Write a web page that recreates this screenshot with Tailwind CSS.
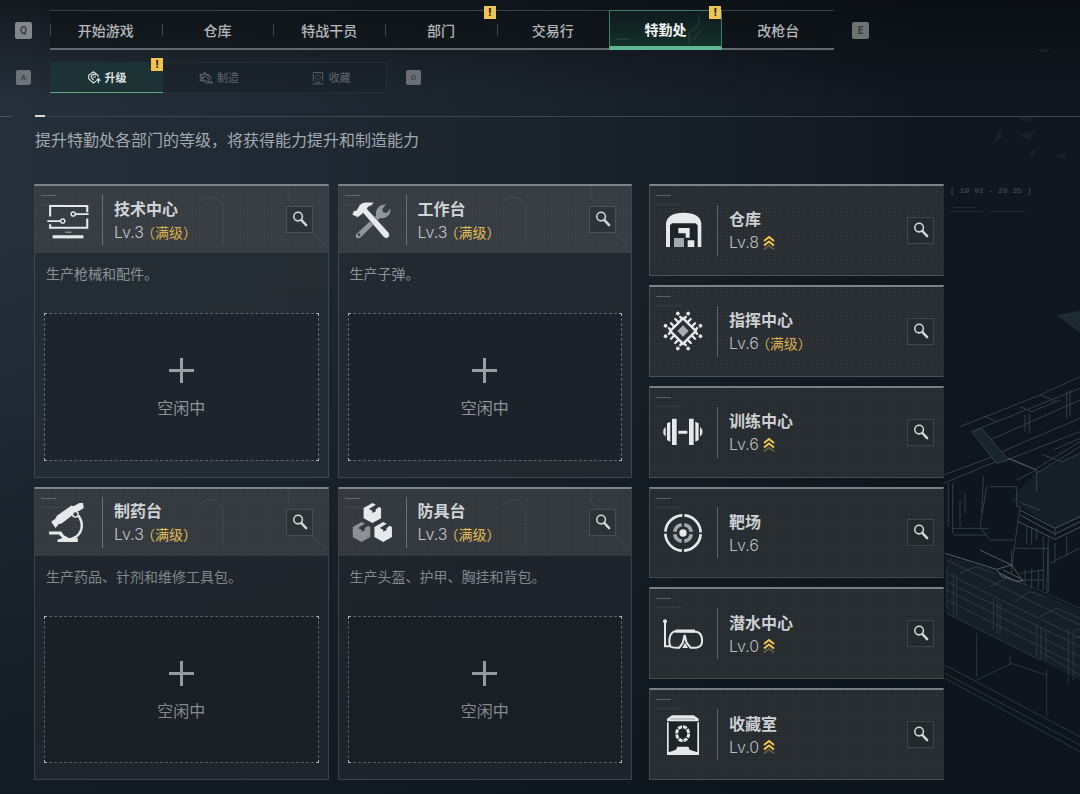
<!DOCTYPE html>
<html lang="zh-CN">
<head>
<meta charset="utf-8">
<meta name="viewport" content="width=device-width, initial-scale=1">
<title>特勤处</title>
<script src="https://cdn.jsdelivr.net/npm/@tailwindcss/browser@4"></script>
</head>
<body class="relative flex min-h-screen flex-col overflow-x-hidden bg-[#141c24] bg-[linear-gradient(to_bottom,rgba(8,10,13,0.6),transparent_100px),linear-gradient(to_bottom,transparent_30%,rgba(12,20,27,0.75)),linear-gradient(to_right,#252f3a,#1c252e_45%,#10171f_85%)] pb-[14px] font-['Noto_Sans_CJK_SC',sans-serif] text-[#c3c7cb]">

<!-- shared symbols -->
<svg class="hidden" aria-hidden="true">
  <symbol id="search" viewBox="765 78 81 81">
    <g fill="none" stroke="#d3d6d9"><circle cx="801" cy="109" r="14" stroke-width="5"/><path d="M811 120 827 137" stroke-width="8" stroke-linecap="round"/></g>
  </symbol>
  <symbol id="rise" viewBox="0 0 12 15">
    <g fill="none" stroke="#f0c64f" stroke-width="2"><path d="M1 6 6 2 11 6M1 10.500 6 6.500 11 10.500"/><path d="M1 14.500 6 10.500 11 14.500" opacity=".3"/></g>
  </symbol>
  <symbol id="corners" viewBox="0 0 12 12"><path d="M0 0H3V1H1V3H0Z" fill="#aab0b6"/></symbol>
  <symbol id="caption" viewBox="0 0 30 12">
    <path d="M0 1.500H15" stroke="#868b8f" opacity=".55"/><path d="M0 10.500H26" stroke="#5f666b" opacity=".25"/>
  </symbol>
  <symbol id="trace" viewBox="0 0 150 66">
    <path d="M22 16Q26 11 34 11Q44 13 45 22V58M110 0V12L126 30V40L148 60" fill="none" stroke="#7b848c" stroke-width="1" opacity=".2"/>
  </symbol>
</svg>

<!-- wireframe scenery behind the panels -->
<svg class="pointer-events-none absolute top-[280px] right-0 h-[514px] w-[140px]" viewBox="0 0 420 1542" fill="none" stroke="#56656e" stroke-width="3" aria-hidden="true">
  <path d="M350 105 420 92V158Z" fill="#1d2a31" stroke="none"/>
  <path d="M210 660 345 745 420 710V520L290 575ZM20 830 170 868 300 940 420 990V1200L20 1000Z" fill="#1b272e" stroke="none" opacity=".6"/>
  <g opacity=".5">
    <path d="M60 440 300 345 420 290M95 455 420 325M150 480 420 360M185 515 420 415M200 540 420 455M10 610 180 540M10 585 160 530M240 380 275 395 360 360M300 345 345 362M130 408 170 425M255 405V455M268 400V460M380 335V415M390 330V410"/>
    <path d="M95 455 125 445 205 540 170 550Z" fill="#22323a"/>
    <path d="M205 535 290 570" stroke="#84929a" stroke-width="4"/>
    <path d="M290 565 420 485M290 580 420 500M310 525 365 545 420 520M340 510 420 475M230 600 290 570V635M150 620H230V680H240L215 860M140 620 120 740 150 780H220M130 590 125 700M25 610V740M38 610V760M40 745H145M40 765H140M60 660V740M75 640V700"/>
    <path d="M240 690 345 745 420 710M240 705 345 762 420 725M235 725 345 778 420 742" stroke="#7d8c95"/>
    <path d="M245 670 300 690M260 735V790M275 740V795M290 745V780M345 745V770M220 805H325V935M215 810V880M310 770V930M325 770 320 940M330 850 420 805M345 790V850M380 770V830M240 880 310 870M240 900H310M255 870V915M275 865V925M295 870V925"/>
  </g>
  <g opacity=".55">
    <path d="M15 820 170 868 185 890 240 905 M120 810 215 855 250 905M170 868 215 855M180 880 230 905 250 900M190 870 240 895" stroke="#8a979f"/>
    <path d="M240 905 420 985M60 880 110 860 160 880M150 920 200 895 245 910M225 965 270 935 315 950M300 1010 350 985 420 1015M20 840 420 1035M20 880 420 1075M20 905 420 1100M20 930 420 1130M20 960 420 1160M20 1000 300 1140M300 1115 420 1185M160 955V1050M172 960V1060M180 965V1065M290 1030V1130M303 1040V1140M318 1050V1145M385 1045V1210M400 1050V1200M20 860V990M40 880V1005M50 885V1010M405 1050H420M405 1070H420" opacity=".65"/>
  </g>
  <g opacity=".4">
    <path d="M15 1155 420 1370M15 1180 420 1395M15 1195 420 1415M110 1060V1190M320 1170V1310M110 1200 215 1150 320 1185M210 1125V1155" />
  </g>
</svg>
<svg class="pointer-events-none absolute top-[40px] right-[10px] h-[130px] w-[90px] opacity-15" viewBox="0 0 90 130" fill="#4a5963" aria-hidden="true"><path d="M55 10 70 8 66 13ZM38 78 54 76 50 82ZM40 95 56 90 48 100ZM12 104 20 88 22 98ZM76 116 85 112V118ZM50 112 58 108 52 118Z"/></svg>

<header class="relative">
  <div class="flex items-center gap-[18px] pt-[10px] pr-[211px] pl-[15px]">
    <kbd class="flex size-[17px] items-center justify-center rounded-xs bg-[#83868a] font-['Roboto',sans-serif] text-[10px] font-bold text-[#3b3f44]">Q</kbd>
    <nav class="flex h-10 flex-1 border-t border-b-2 border-t-[#3a4145] border-b-[#63686c] bg-[#0d1114]/50 text-sm font-medium text-[#b4b8bb]" aria-label="主导航">
      <a href="#" class="relative flex flex-1 items-center justify-center before:absolute before:left-0 before:h-3 before:w-px before:bg-[#42474b]">开始游戏</a>
      <a href="#" class="relative flex flex-1 items-center justify-center before:absolute before:left-0 before:h-3 before:w-px before:bg-[#42474b]">仓库</a>
      <a href="#" class="relative flex flex-1 items-center justify-center before:absolute before:left-0 before:h-3 before:w-px before:bg-[#42474b]">特战干员</a>
      <a href="#" class="relative flex flex-1 items-center justify-center before:absolute before:left-0 before:h-3 before:w-px before:bg-[#42474b]">部门
        <span class="absolute -top-[5px] right-px flex h-[13px] w-3 items-center justify-center bg-[#eec455] font-['Roboto',sans-serif] text-[11px] leading-none font-black text-[#2d2610]">!</span></a>
      <a href="#" class="relative flex flex-1 items-center justify-center before:absolute before:left-0 before:h-3 before:w-px before:bg-[#42474b]">交易行</a>
      <a href="#" aria-current="page" class="relative -mt-px -mb-0.5 flex flex-1 items-center justify-center border border-b-4 border-[#3d7f69] border-b-[#61b992] bg-[linear-gradient(to_bottom,#0e1b1c,#15302a)] font-bold text-[#f2f5f4]">
        <svg class="absolute inset-0 size-full" viewBox="0 0 112 36" fill="none" stroke="#54786d" opacity=".4" aria-hidden="true"><path d="M4 29H18M80 34V22L90 14V4M84 30 92 20" /></svg>
        <span class="relative">特勤处</span>
        <span class="absolute -top-[5px] right-0 flex h-[13px] w-3 items-center justify-center bg-[#eec455] font-['Roboto',sans-serif] text-[11px] leading-none font-black text-[#2d2610]">!</span></a>
      <a href="#" class="flex flex-1 items-center justify-center">改枪台</a>
    </nav>
    <kbd class="flex size-[17px] items-center justify-center rounded-xs bg-[#6f7273] font-['Roboto',sans-serif] text-[10px] font-bold text-[#34383b]">E</kbd>
  </div>

  <div class="mt-3 flex items-center gap-[19px] pl-4">
    <kbd class="flex size-[15px] items-center justify-center rounded-xs bg-[#6d7379] font-['Roboto',sans-serif] text-[8px] font-bold text-[#3c434b]">A</kbd>
    <nav class="flex h-[31px] text-[11px] font-medium" aria-label="特勤处分页">
      <a href="#" aria-current="page" class="relative flex w-[113px] items-center justify-center gap-1 border-b border-[#5fa98a] bg-[#1c3234] font-bold text-[#dfe3e3]">
        <svg class="size-[14px]" viewBox="0 0 42 42" fill="none" stroke="#d5dada" stroke-width="3.500" aria-hidden="true"><path d="M27 34 19 39 5 26V16L19 5 33 16V21M12 21Q14 12 22 13L27 16M12 22 20 30M17 21H27"/><path d="M34 40V28M28 32 34 26 40 32" stroke-width="4"/></svg>升级
        <span class="absolute -top-1 right-0 flex h-[13px] w-3 items-center justify-center bg-[#f2c34e] font-['Roboto',sans-serif] text-[11px] leading-none font-black text-[#2d2610]">!</span></a>
      <a href="#" class="flex w-28 items-center justify-center gap-1 border-y border-[#252e36] bg-[#171e25]/40 text-[#565e66]">
        <svg class="size-[14px]" viewBox="0 0 42 42" fill="none" stroke="#59616a" stroke-width="4" aria-hidden="true"><path d="M4 10 11 12 17 5 22 12 31 12M4 10V17L9 21 4 28 14 29 19 34M19 16Q10 17 13 26"/><circle cx="30" cy="20" r="5" stroke-dasharray="4 2"/><circle cx="25" cy="33" r="4" stroke-dasharray="4 2"/><circle cx="36" cy="34" r="3"/></svg>制造</a>
      <a href="#" class="flex w-28 items-center justify-center gap-1 border-y border-r border-[#252e36] bg-[#171e25]/40 text-[#565e66]">
        <svg class="size-[14px]" viewBox="0 0 42 42" fill="none" stroke="#59616a" stroke-width="3" aria-hidden="true"><path d="M5 5H37M7 8V30M35 8V30M5 39H37M14 33H28" /><circle cx="21" cy="19" r="7" stroke-dasharray="5 3"/></svg>收藏</a>
    </nav>
    <kbd class="flex size-[15px] items-center justify-center rounded-xs bg-[#696e74] font-['Roboto',sans-serif] text-[8px] font-bold text-[#3c434b]">D</kbd>
  </div>

  <div class="mt-[22px] flex items-center" aria-hidden="true">
    <span class="h-px w-[11px] bg-[#4a5259]"></span>
    <span class="ml-6 h-0.5 w-[10px] bg-[#d6d9db]"></span>
    <span class="h-px flex-1 bg-[#3d464d]"></span>
  </div>
  <h1 class="mt-[10px] pl-[35px] text-base leading-6 text-[#a3a9ae]">提升特勤处各部门的等级，将获得能力提升和制造能力</h1>
</header>

<main class="relative mt-[33px] grid flex-1 grid-cols-[598fr_295fr] gap-[17px] pr-[136px] pl-[34px]">
  <section class="grid grid-cols-2 grid-rows-2 gap-[9px]" aria-label="生产部门">

    <article class="flex flex-col border border-t-2 border-[#3f474e] border-t-[#7e8488] bg-[#262d34]/90">
      <div class="relative flex h-[67px] items-center bg-[#3a4046] bg-[repeating-linear-gradient(to_right,rgba(0,0,0,0.06)_0_1px,transparent_1px_3px),repeating-linear-gradient(to_bottom,rgba(0,0,0,0.06)_0_1px,transparent_1px_3px)] pr-[15px] pl-3">
        <svg class="absolute top-2 left-1.5 h-3 w-[30px]" aria-hidden="true"><use href="#caption"/></svg>
        <svg class="absolute top-0 right-0 h-[66px] w-[150px]" aria-hidden="true"><use href="#trace"/></svg>
        <svg class="relative size-[42px]" viewBox="54 54 120 120" fill="none" stroke="#e6e8ea" stroke-width="6" aria-hidden="true">
          <path d="M63 104V74H169V92M63 126V136H169V110"/><path d="M134 97H173M55 117H93" stroke-width="5"/><circle cx="129" cy="97" r="6" stroke-width="4"/><circle cx="99" cy="117" r="6" stroke-width="4"/><path d="M106 149H124" stroke="#8b9094" stroke-width="4"/><path d="M70 162H158" stroke-width="9"/>
        </svg>
        <span class="mr-[11px] ml-[13px] h-[51px] w-px bg-[#6c7276]"></span>
        <div class="relative flex-1">
          <h2 class="text-base leading-6 font-bold text-[#d0d4d7]">技术中心</h2>
          <p class="flex items-center gap-1 leading-6"><span class="font-['Inter',sans-serif] text-base leading-6 font-light text-[#c2c6ca]">Lv.3</span><span class="text-sm leading-6 text-[#d9b04e] [font-feature-settings:'halt']">（满级）</span></p>
        </div>
        <button type="button" aria-label="查看技术中心" class="relative size-[27px] border border-[#4a5157] bg-[#2d3338]"><svg class="size-full"><use href="#search"/></svg></button>
      </div>
      <p class="mt-2 px-[11px] text-sm leading-6 text-[#8b9197]">生产枪械和配件。</p>
      <button type="button" class="relative mx-[9px] mt-7 mb-4 flex flex-1 flex-col items-center justify-center gap-3 border border-dashed border-[#5f676e] bg-[#1e242b] pt-1">
        <svg class="absolute -top-px -left-px size-3"><use href="#corners"/></svg><svg class="absolute -top-px -right-px size-3 rotate-90"><use href="#corners"/></svg><svg class="absolute -right-px -bottom-px size-3 rotate-180"><use href="#corners"/></svg><svg class="absolute -bottom-px -left-px size-3 -rotate-90"><use href="#corners"/></svg>
        <svg class="size-[25px]" viewBox="0 0 25 25" stroke="#9a9fa6" stroke-width="3" aria-hidden="true"><path d="M12.500 0V25M0 12.500H25"/></svg>
        <span class="text-base leading-6 text-[#8e9399]">空闲中</span>
      </button>
    </article>

    <article class="flex flex-col border border-t-2 border-[#3f474e] border-t-[#7e8488] bg-[#232a31]/90">
      <div class="relative flex h-[67px] items-center bg-[#3a4046] bg-[repeating-linear-gradient(to_right,rgba(0,0,0,0.06)_0_1px,transparent_1px_3px),repeating-linear-gradient(to_bottom,rgba(0,0,0,0.06)_0_1px,transparent_1px_3px)] pr-[15px] pl-3">
        <svg class="absolute top-2 left-1.5 h-3 w-[30px]" aria-hidden="true"><use href="#caption"/></svg>
        <svg class="absolute top-0 right-0 h-[66px] w-[150px]" aria-hidden="true"><use href="#trace"/></svg>
        <svg class="relative size-[42px]" viewBox="63 54 120 120" aria-hidden="true">
          <path d="M78 155 135 101Q131 89 142 77Q149 68 163 70L152 83 156 93 166 93 175 81Q178 96 166 104 158 111 146 108L91 163Q83 169 77 163 75 158 78 155Z" fill="#92979b"/><circle cx="86" cy="156" r="4" fill="#3a4046"/>
          <path d="M66 99 71 87 78 87 88 70Q98 60 113 63L129 63 122 73Q111 74 109 82L172 151 173 160 166 167 158 165 98 95 82 107Z" fill="#e6e8ea" stroke="#3a4046" stroke-width="2"/>
        </svg>
        <span class="mr-[11px] ml-[13px] h-[51px] w-px bg-[#6c7276]"></span>
        <div class="relative flex-1">
          <h2 class="text-base leading-6 font-bold text-[#d0d4d7]">工作台</h2>
          <p class="flex items-center gap-1 leading-6"><span class="font-['Inter',sans-serif] text-base leading-6 font-light text-[#c2c6ca]">Lv.3</span><span class="text-sm leading-6 text-[#e0bb55] [font-feature-settings:'halt']">（满级）</span></p>
        </div>
        <button type="button" aria-label="查看工作台" class="relative size-[27px] border border-[#4a5157] bg-[#2d3338]"><svg class="size-full"><use href="#search"/></svg></button>
      </div>
      <p class="mt-2 px-[11px] text-sm leading-6 text-[#8b9197]">生产子弹。</p>
      <button type="button" class="relative mx-[9px] mt-7 mb-4 flex flex-1 flex-col items-center justify-center gap-3 border border-dashed border-[#5f676e] bg-[#1c2229] pt-1">
        <svg class="absolute -top-px -left-px size-3"><use href="#corners"/></svg><svg class="absolute -top-px -right-px size-3 rotate-90"><use href="#corners"/></svg><svg class="absolute -right-px -bottom-px size-3 rotate-180"><use href="#corners"/></svg><svg class="absolute -bottom-px -left-px size-3 -rotate-90"><use href="#corners"/></svg>
        <svg class="size-[25px]" viewBox="0 0 25 25" stroke="#9a9fa6" stroke-width="3" aria-hidden="true"><path d="M12.500 0V25M0 12.500H25"/></svg>
        <span class="text-base leading-6 text-[#8e9399]">空闲中</span>
      </button>
    </article>

    <article class="flex flex-col border border-t-2 border-[#3a4248] border-t-[#7e8488] bg-[#20272d]/90">
      <div class="relative flex h-[67px] items-center bg-[#373d42] bg-[repeating-linear-gradient(to_right,rgba(0,0,0,0.06)_0_1px,transparent_1px_3px),repeating-linear-gradient(to_bottom,rgba(0,0,0,0.06)_0_1px,transparent_1px_3px)] pr-[15px] pl-3">
        <svg class="absolute top-2 left-1.5 h-3 w-[30px]" aria-hidden="true"><use href="#caption"/></svg>
        <svg class="absolute top-0 right-0 h-[66px] w-[150px]" aria-hidden="true"><use href="#trace"/></svg>
        <svg class="relative size-[42px]" viewBox="54 62 120 120" aria-hidden="true">
          <path d="M66 121 78 113 82 104 124 75 129 77 147 68 157 68 159 82 147 90 140 92 96 126 88 128 78 139Z" fill="#e6e8ea"/>
          <circle cx="135" cy="100" r="8" fill="#373d42" stroke="#e6e8ea" stroke-width="4"/>
          <path d="M144 104Q157 121 152 143 146 164 122 171" fill="none" stroke="#e6e8ea" stroke-width="7"/>
          <path d="M60 149H95L102 160 117 168H142V179H84V173L98 168 88 158H60Z" fill="#e6e8ea"/>
        </svg>
        <span class="mr-[11px] ml-[13px] h-[51px] w-px bg-[#6c7276]"></span>
        <div class="relative flex-1">
          <h2 class="text-base leading-6 font-bold text-[#d0d4d7]">制药台</h2>
          <p class="flex items-center gap-1 leading-6"><span class="font-['Inter',sans-serif] text-base leading-6 font-light text-[#c2c6ca]">Lv.3</span><span class="text-sm leading-6 text-[#e0bb55] [font-feature-settings:'halt']">（满级）</span></p>
        </div>
        <button type="button" aria-label="查看制药台" class="relative size-[27px] border border-[#474e53] bg-[#2d3235]"><svg class="size-full"><use href="#search"/></svg></button>
      </div>
      <p class="mt-2 px-[11px] text-sm leading-6 text-[#81878c]">生产药品、针剂和维修工具包。</p>
      <button type="button" class="relative mx-[9px] mt-7 mb-4 flex flex-1 flex-col items-center justify-center gap-3 border border-dashed border-[#565e64] bg-[#1a2025] pt-1">
        <svg class="absolute -top-px -left-px size-3"><use href="#corners"/></svg><svg class="absolute -top-px -right-px size-3 rotate-90"><use href="#corners"/></svg><svg class="absolute -right-px -bottom-px size-3 rotate-180"><use href="#corners"/></svg><svg class="absolute -bottom-px -left-px size-3 -rotate-90"><use href="#corners"/></svg>
        <svg class="size-[25px]" viewBox="0 0 25 25" stroke="#96999d" stroke-width="3" aria-hidden="true"><path d="M12.500 0V25M0 12.500H25"/></svg>
        <span class="text-base leading-6 text-[#85898d]">空闲中</span>
      </button>
    </article>

    <article class="flex flex-col border border-t-2 border-[#3a4248] border-t-[#7e8488] bg-[#1f262c]/90">
      <div class="relative flex h-[67px] items-center bg-[#373c41] bg-[repeating-linear-gradient(to_right,rgba(0,0,0,0.06)_0_1px,transparent_1px_3px),repeating-linear-gradient(to_bottom,rgba(0,0,0,0.06)_0_1px,transparent_1px_3px)] pr-[15px] pl-3">
        <svg class="absolute top-2 left-1.5 h-3 w-[30px]" aria-hidden="true"><use href="#caption"/></svg>
        <svg class="absolute top-0 right-0 h-[66px] w-[150px]" aria-hidden="true"><use href="#trace"/></svg>
        <svg class="relative size-[42px]" viewBox="63 64 120 120" aria-hidden="true">
          <g fill="#e6e8ea"><path id="cube" d="M124 70 134 75 114 87 124 92 124 98 134 93 133 88 143 81 149 84V113L124 127 99 113V84Z"/><use href="#cube" x="31" y="54"/></g><use href="#cube" x="-31" y="54" fill="#8d9195"/>
        </svg>
        <span class="mr-[11px] ml-[13px] h-[51px] w-px bg-[#6c7276]"></span>
        <div class="relative flex-1">
          <h2 class="text-base leading-6 font-bold text-[#d0d4d7]">防具台</h2>
          <p class="flex items-center gap-1 leading-6"><span class="font-['Inter',sans-serif] text-base leading-6 font-light text-[#c2c6ca]">Lv.3</span><span class="text-sm leading-6 text-[#e0bb55] [font-feature-settings:'halt']">（满级）</span></p>
        </div>
        <button type="button" aria-label="查看防具台" class="relative size-[27px] border border-[#474e53] bg-[#2d3235]"><svg class="size-full"><use href="#search"/></svg></button>
      </div>
      <p class="mt-2 px-[11px] text-sm leading-6 text-[#81878c]">生产头盔、护甲、胸挂和背包。</p>
      <button type="button" class="relative mx-[9px] mt-7 mb-4 flex flex-1 flex-col items-center justify-center gap-3 border border-dashed border-[#565e64] bg-[#191f24] pt-1">
        <svg class="absolute -top-px -left-px size-3"><use href="#corners"/></svg><svg class="absolute -top-px -right-px size-3 rotate-90"><use href="#corners"/></svg><svg class="absolute -right-px -bottom-px size-3 rotate-180"><use href="#corners"/></svg><svg class="absolute -bottom-px -left-px size-3 -rotate-90"><use href="#corners"/></svg>
        <svg class="size-[25px]" viewBox="0 0 25 25" stroke="#96999d" stroke-width="3" aria-hidden="true"><path d="M12.500 0V25M0 12.500H25"/></svg>
        <span class="text-base leading-6 text-[#85898d]">空闲中</span>
      </button>
    </article>
  </section>

  <section class="grid grid-rows-6 gap-[9px]" aria-label="功能设施">
    <article class="relative flex items-center border border-t-2 border-[#4b5257] border-t-[#7e8488] border-r-transparent bg-[#2d3237] bg-[repeating-linear-gradient(to_right,rgba(0,0,0,0.09)_0_1px,transparent_1px_3px),repeating-linear-gradient(to_bottom,rgba(0,0,0,0.09)_0_1px,transparent_1px_3px)] pr-[9px] pl-[13px]">
      <svg class="absolute top-2 left-1.5 h-3 w-[30px]" aria-hidden="true"><use href="#caption"/></svg>
      <svg class="size-10" viewBox="69 90 120 120" fill="#e6e8ea" aria-hidden="true"><path d="M84 201V130H178V201Z" fill="#1f2428"/><path d="M78 201V130Q82 98 131 98T184 130V201H173V136L166 130H96L90 136V201ZM115 144H149V173H137V160H115ZM143 181H163V201H143Z"/><path d="M102 174H132V201H102Z" fill="#a4a8ab"/></svg>
      <span class="mr-[11px] ml-[14px] h-[51px] w-px bg-[#5f6569]"></span>
      <div class="flex-1">
        <h2 class="text-base leading-6 font-bold text-[#cdd0d3]">仓库</h2>
        <p class="flex items-center gap-1 font-['Inter',sans-serif] text-base leading-6 font-light text-[#b9bdc0]">Lv.8<svg class="h-[15px] w-3" role="img" aria-label="可升级"><use href="#rise"/></svg></p>
      </div>
      <button type="button" aria-label="查看仓库" class="size-[27px] border border-[#40464a] bg-[#262b2f]"><svg class="size-full"><use href="#search"/></svg></button>
    </article>

    <article class="relative flex items-center border border-t-2 border-[#4b5257] border-t-[#7e8488] border-r-transparent bg-[#2d3237] bg-[repeating-linear-gradient(to_right,rgba(0,0,0,0.09)_0_1px,transparent_1px_3px),repeating-linear-gradient(to_bottom,rgba(0,0,0,0.09)_0_1px,transparent_1px_3px)] pr-[9px] pl-[13px]">
      <svg class="absolute top-2 left-1.5 h-3 w-[30px]" aria-hidden="true"><use href="#caption"/></svg>
      <svg class="size-10" viewBox="-60 -60 120 120" fill="none" stroke="#e6e8ea" stroke-width="7" stroke-linecap="round" aria-hidden="true"><g transform="rotate(45)">
        <path d="M-27-27H27V27H-27Z"/><path d="M-12-12H12V12H-12Z" fill="#a9adb0" stroke="none"/>
        <g id="pins"><path d="M-9-30V-42M9-30V-42M-24-30V-36M24-30V-36"/><path d="M-26-48V-48.100M26-48V-48.100" stroke-width="11"/></g>
        <use href="#pins" transform="rotate(90)"/><use href="#pins" transform="rotate(180)"/><use href="#pins" transform="rotate(270)"/></g></svg>
      <span class="mr-[11px] ml-[14px] h-[51px] w-px bg-[#5f6569]"></span>
      <div class="flex-1">
        <h2 class="text-base leading-6 font-bold text-[#cdd0d3]">指挥中心</h2>
        <p class="flex items-center gap-1 leading-6"><span class="font-['Inter',sans-serif] text-base leading-6 font-light text-[#b9bdc0]">Lv.6</span><span class="text-sm leading-6 text-[#d9b04e] [font-feature-settings:'halt']">（满级）</span></p>
      </div>
      <button type="button" aria-label="查看指挥中心" class="size-[27px] border border-[#40464a] bg-[#262b2f]"><svg class="size-full"><use href="#search"/></svg></button>
    </article>

    <article class="relative flex items-center border border-t-2 border-[#464d52] border-t-[#797f83] border-r-transparent bg-[#2b3035] bg-[repeating-linear-gradient(to_right,rgba(0,0,0,0.09)_0_1px,transparent_1px_3px),repeating-linear-gradient(to_bottom,rgba(0,0,0,0.09)_0_1px,transparent_1px_3px)] pr-[9px] pl-[13px]">
      <svg class="absolute top-2 left-1.5 h-3 w-[30px]" aria-hidden="true"><use href="#caption"/></svg>
      <svg class="size-10" viewBox="69 97 120 120" fill="#e6e8ea" aria-hidden="true"><path d="M70 150 77 141V171L70 162ZM81 131 91 126V186L81 181ZM96 117H110V196H96ZM115 153H142V162H115ZM147 117H161V196H147ZM166 126 176 131V181L166 186ZM180 141 187 150V162L180 171Z"/></svg>
      <span class="mr-[11px] ml-[14px] h-[51px] w-px bg-[#5f6569]"></span>
      <div class="flex-1">
        <h2 class="text-base leading-6 font-bold text-[#cdd0d3]">训练中心</h2>
        <p class="flex items-center gap-1 font-['Inter',sans-serif] text-base leading-6 font-light text-[#b9bdc0]">Lv.6<svg class="h-[15px] w-3" role="img" aria-label="可升级"><use href="#rise"/></svg></p>
      </div>
      <button type="button" aria-label="查看训练中心" class="size-[27px] border border-[#3d4347] bg-[#24292c]"><svg class="size-full"><use href="#search"/></svg></button>
    </article>

    <article class="relative flex items-center border border-t-2 border-[#464d52] border-t-[#797f83] border-r-transparent bg-[#2b3034] bg-[repeating-linear-gradient(to_right,rgba(0,0,0,0.09)_0_1px,transparent_1px_3px),repeating-linear-gradient(to_bottom,rgba(0,0,0,0.09)_0_1px,transparent_1px_3px)] pr-[9px] pl-[13px]">
      <svg class="absolute top-2 left-1.5 h-3 w-[30px]" aria-hidden="true"><use href="#caption"/></svg>
      <svg class="size-10" viewBox="-60 -60 120 120" fill="none" stroke="#e6e8ea" aria-hidden="true"><circle r="53" stroke-width="8" pathLength="100" stroke-dasharray="23 2" stroke-dashoffset="-1"/><circle r="25" stroke="#a4a8ab" stroke-width="11" pathLength="100" stroke-dasharray="20 5" stroke-dashoffset="-2.500"/><circle r="11" fill="#e6e8ea" stroke="none"/></svg>
      <span class="mr-[11px] ml-[14px] h-[51px] w-px bg-[#5f6569]"></span>
      <div class="flex-1">
        <h2 class="text-base leading-6 font-bold text-[#cdd0d3]">靶场</h2>
        <p class="font-['Inter',sans-serif] text-base leading-6 font-light text-[#b9bdc0]">Lv.6</p>
      </div>
      <button type="button" aria-label="查看靶场" class="size-[27px] border border-[#3d4347] bg-[#24292c]"><svg class="size-full"><use href="#search"/></svg></button>
    </article>

    <article class="relative flex items-center border border-t-2 border-[#464d52] border-t-[#797f83] border-r-transparent bg-[#2b3034] bg-[repeating-linear-gradient(to_right,rgba(0,0,0,0.09)_0_1px,transparent_1px_3px),repeating-linear-gradient(to_bottom,rgba(0,0,0,0.09)_0_1px,transparent_1px_3px)] pr-[9px] pl-[13px]">
      <svg class="absolute top-2 left-1.5 h-3 w-[30px]" aria-hidden="true"><use href="#caption"/></svg>
      <svg class="size-10" viewBox="69 99 120 120" fill="none" stroke="#e6e8ea" stroke-width="6" aria-hidden="true"><circle cx="75" cy="121" r="6" fill="#e6e8ea" stroke="none"/><path d="M75 122V196H90"/><path d="M104 151Q92 155 89 170 86 188 92 197 96 201 118 200L128 186 134 162 140 186 152 200H168Q184 198 186 184 188 155 168 152Z"/><path d="M107 150H165" stroke-width="9"/><path d="M127 201 135 186 144 201Z" fill="#e6e8ea" stroke="none"/></svg>
      <span class="mr-[11px] ml-[14px] h-[51px] w-px bg-[#5f6569]"></span>
      <div class="flex-1">
        <h2 class="text-base leading-6 font-bold text-[#cdd0d3]">潜水中心</h2>
        <p class="flex items-center gap-1 font-['Inter',sans-serif] text-base leading-6 font-light text-[#b9bdc0]">Lv.0<svg class="h-[15px] w-3" role="img" aria-label="可升级"><use href="#rise"/></svg></p>
      </div>
      <button type="button" aria-label="查看潜水中心" class="size-[27px] border border-[#3d4347] bg-[#24292c]"><svg class="size-full"><use href="#search"/></svg></button>
    </article>

    <article class="relative flex items-center border border-t-2 border-[#464d52] border-t-[#797f83] border-r-transparent bg-[#2b3034] bg-[repeating-linear-gradient(to_right,rgba(0,0,0,0.09)_0_1px,transparent_1px_3px),repeating-linear-gradient(to_bottom,rgba(0,0,0,0.09)_0_1px,transparent_1px_3px)] pr-[9px] pl-[13px]">
      <svg class="absolute top-2 left-1.5 h-3 w-[30px]" aria-hidden="true"><use href="#caption"/></svg>
      <svg class="size-10" viewBox="69 404 120 120" fill="#e6e8ea" aria-hidden="true"><path d="M84 423H174V516H84Z" fill="#1f2427"/><path d="M81 415 96 405H161L176 415V423H81ZM81 426H86V515H81ZM172 426H177V515H172ZM81 515H88L108 508 112 499H145L149 508 170 515H177V524H81Z"/><path d="M92 416H165" stroke="#9a9ea1" stroke-width="3"/><ellipse cx="128" cy="460" rx="18" ry="21" fill="none" stroke="#e6e8ea" stroke-width="9" pathLength="80" stroke-dasharray="8 2"/></svg>
      <span class="mr-[11px] ml-[14px] h-[51px] w-px bg-[#5f6569]"></span>
      <div class="flex-1">
        <h2 class="text-base leading-6 font-bold text-[#cdd0d3]">收藏室</h2>
        <p class="flex items-center gap-1 font-['Inter',sans-serif] text-base leading-6 font-light text-[#b9bdc0]">Lv.0<svg class="h-[15px] w-3" role="img" aria-label="可升级"><use href="#rise"/></svg></p>
      </div>
      <button type="button" aria-label="查看收藏室" class="size-[27px] border border-[#3d4347] bg-[#24292c]"><svg class="size-full"><use href="#search"/></svg></button>
    </article>
  </section>

  <aside class="absolute top-0 right-0 w-[130px] font-['Liberation_Mono',monospace] text-[#47515a]">
    <p class="text-[8px] leading-[14px] whitespace-pre">[ 19 02 - 20 35 ]</p>
    <svg class="mt-2 h-2 w-[80px] opacity-50" viewBox="0 0 80 8" stroke="#3a454d" aria-hidden="true"><path d="M4 1.500H26M0 5.500H33M40 5.500H76" stroke-dasharray="3 1"/></svg>
  </aside>
</main>
</body>
</html>
